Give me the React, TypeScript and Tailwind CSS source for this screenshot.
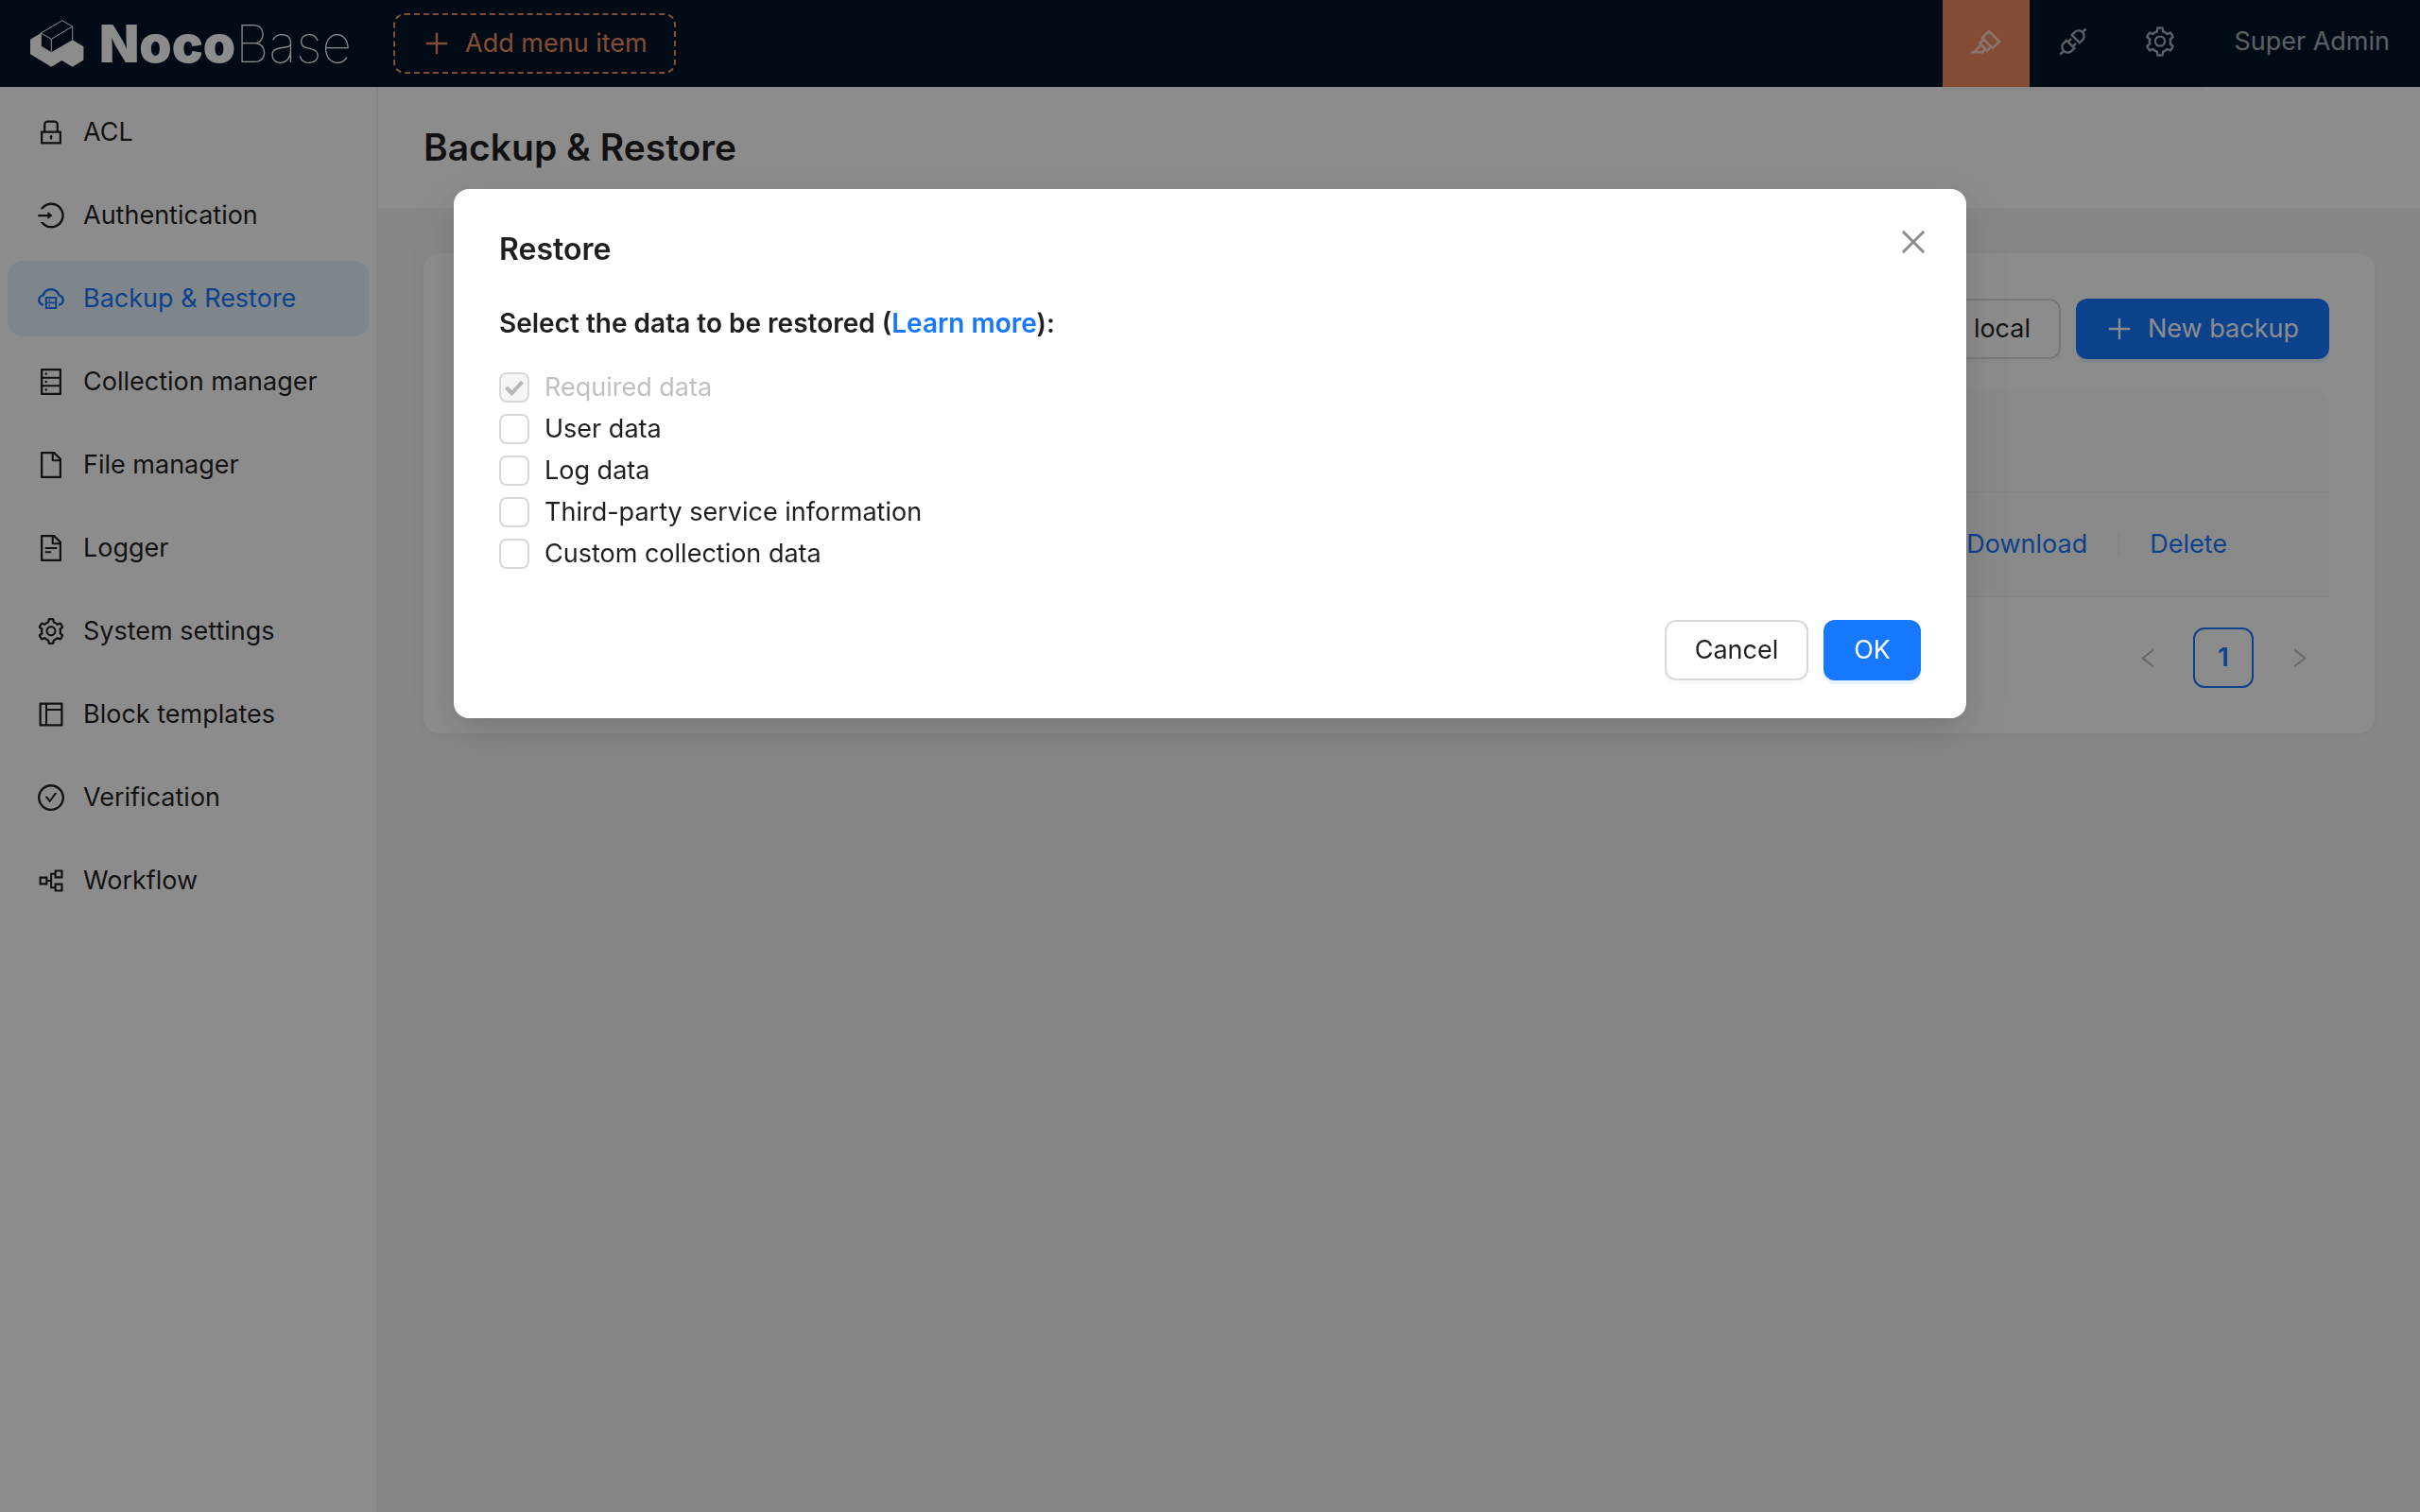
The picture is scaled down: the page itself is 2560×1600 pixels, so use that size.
import React from "react";
import {
  AiOutlineLock, AiOutlineLogin, AiOutlineCloudServer, AiOutlineDatabase, AiOutlineFile, AiOutlineFileText,
  AiOutlineSetting, AiOutlineLayout, AiOutlineCheckCircle, AiOutlinePartition, AiOutlineHighlight, AiOutlineApi,
  AiOutlinePlus, AiOutlineClose, AiOutlineLeft, AiOutlineRight,
} from "react-icons/ai";

const menu = [
  { label: "ACL", Icon: AiOutlineLock },
  { label: "Authentication", Icon: AiOutlineLogin },
  { label: "Backup & Restore", Icon: AiOutlineCloudServer, active: true },
  { label: "Collection manager", Icon: AiOutlineDatabase },
  { label: "File manager", Icon: AiOutlineFile },
  { label: "Logger", Icon: AiOutlineFileText },
  { label: "System settings", Icon: AiOutlineSetting },
  { label: "Block templates", Icon: AiOutlineLayout },
  { label: "Verification", Icon: AiOutlineCheckCircle },
  { label: "Workflow", Icon: AiOutlinePartition },
];

const options = [
  { label: "Required data", locked: true },
  { label: "User data" },
  { label: "Log data" },
  { label: "Third-party service information" },
  { label: "Custom collection data" },
];

function Logo() {
  return (
    <a href="#" aria-label="NocoBase" className="flex h-full w-[384px] shrink-0 items-center gap-4 pl-8 text-white">
      <svg viewBox="0 0 57 50" className="h-[50px] w-[57px]" fill="none">
        <path d="M0 20.7 L11.3 14 V27.6 L22.3 34.3 L44.7 21.2 L56.4 28.2 V42.4 L44.7 49.7 L33.4 43 L22.3 49.7 L0 36.3 Z" fill="currentColor" />
        <path d="M11.3 14 L33.7 0.7 L44.7 6.9 V21.2 M11.3 14 L22.3 20.3 L44.7 6.9 M22.3 20.3 V34.3 M11.3 14 V27.6" stroke="currentColor" strokeWidth="1" />
      </svg>
      <span className="flex items-baseline text-[55px] leading-none">
        <span className="font-black">Noco</span>
        <span className="font-thin">Base</span>
      </span>
    </a>
  );
}

function Header() {
  const tool = "flex h-full w-[92px] items-center justify-center pb-1 text-[36px] shadow-[0_4px_0_rgba(0,0,0,0.02)]";
  return (
    <header className="relative z-10 flex h-[92px] items-center bg-[#001529] text-white/65">
      <Logo />
      <button className="ml-8 flex h-16 items-center gap-3.5 rounded-xl border-2 border-dashed border-[#f18b62] px-7 text-[#f18b62]">
        <AiOutlinePlus className="size-8" />
        Add menu item
      </button>
      <div className="ml-auto flex h-full items-center">
        <button aria-label="UI editor" className={`${tool} bg-[#f18b62]`}><AiOutlineHighlight /></button>
        <button aria-label="Plugin manager" className={tool}><AiOutlineApi /></button>
        <button aria-label="Settings" className={tool}><AiOutlineSetting /></button>
        <button className="h-full px-8 pb-1">Super Admin</button>
      </div>
    </header>
  );
}

function Sidebar() {
  return (
    <nav className="w-[400px] shrink-0 border-r-2 border-[#f0f0f0] bg-white p-2">
      <ul className="flex flex-col gap-2">
        {menu.map(({ label, Icon, active }) => (
          <li key={label}>
            <a
              href="#"
              className={`flex h-20 items-center gap-[18px] rounded-2xl pl-[30px] ${active ? "bg-[#e6f4ff] text-[#1677ff]" : ""}`}
            >
              <Icon className="size-8" />
              {label}
            </a>
          </li>
        ))}
      </ul>
    </nav>
  );
}

function Content() {
  return (
    <main className="min-w-0 flex-1">
      <div className="flex h-32 items-center bg-white px-12">
        <h1 className="text-[39px] font-semibold">Backup &amp; Restore</h1>
      </div>
      <section className="m-12 rounded-2xl bg-white p-12 shadow-[0_2px_4px_rgba(0,0,0,0.03),0_2px_12px_rgba(0,0,0,0.02)]">
        <div className="flex justify-end gap-4">
          <button className="h-16 rounded-xl border-2 border-[#d9d9d9] px-[30px] shadow-[0_4px_0_rgba(0,0,0,0.02)]">
            Restore backup from local
          </button>
          <button className="flex h-16 items-center gap-3.5 rounded-xl bg-[#1677ff] px-8 pl-[30px] text-white shadow-[0_4px_0_rgba(5,145,255,0.1)]">
            <AiOutlinePlus className="size-8" />
            New backup
          </button>
        </div>
        <table className="mt-8 w-full border-separate border-spacing-0 text-left">
          <thead>
            <tr className="h-[110px] bg-[#fafafa]">
              <th className="rounded-tl-2xl border-b-2 border-[#f0f0f0]" />
              <th className="rounded-tr-2xl border-b-2 border-[#f0f0f0]" />
            </tr>
          </thead>
          <tbody>
            <tr className="h-[110px] bg-[#fafafa]">
              <td className="border-b-2 border-[#f0f0f0]" />
              <td className="w-[418px] border-b-2 border-[#f0f0f0] text-[#1677ff]">
                <div className="flex items-center justify-end gap-8 pr-[108px]">
                  <a href="#">Download</a>
                  <span className="h-6 w-0.5 bg-[#f0f0f0]" />
                  <a href="#">Delete</a>
                </div>
              </td>
            </tr>
          </tbody>
        </table>
        <div className="mt-8 flex justify-end gap-4">
          <button aria-label="Previous page" disabled className="flex size-16 items-center justify-center text-black/25">
            <AiOutlineLeft />
          </button>
          <button aria-current="page" className="size-16 rounded-xl border-2 border-[#1677ff] font-semibold text-[#1677ff]">1</button>
          <button aria-label="Next page" disabled className="flex size-16 items-center justify-center text-black/25">
            <AiOutlineRight />
          </button>
        </div>
      </section>
    </main>
  );
}

function Option({ label, locked }: { label: string; locked?: boolean }) {
  return (
    <label className={`flex h-11 items-center gap-4 ${locked ? "text-black/25" : ""}`}>
      <span className="relative grid size-8 shrink-0">
        <input
          type="checkbox"
          defaultChecked={locked}
          disabled={locked}
          className="peer size-8 appearance-none rounded-lg border-2 border-[#d9d9d9] bg-white disabled:bg-[#f5f5f5]"
        />
        <svg viewBox="0 0 32 32" className="pointer-events-none absolute inset-0 hidden size-8 peer-checked:block" fill="none">
          <path d="M7.500 16 L13.500 22 L24.500 10" stroke="currentColor" strokeWidth="4" />
        </svg>
      </span>
      {label}
    </label>
  );
}

function RestoreDialog() {
  return (
    <div className="fixed inset-0 z-20 flex items-start justify-center bg-black/45 pt-[200px]">
      <div
        role="dialog"
        aria-modal="true"
        aria-labelledby="dialog-title"
        className="relative w-full max-w-[1600px] rounded-2xl bg-white px-12 py-10 shadow-[0_12px_32px_rgba(0,0,0,0.08),0_6px_12px_-8px_rgba(0,0,0,0.12),0_18px_56px_16px_rgba(0,0,0,0.05)]"
      >
        <button aria-label="Close" className="absolute top-[34px] right-[34px] flex size-11 items-center justify-center text-[36px] text-black/45">
          <AiOutlineClose />
        </button>
        <h2 id="dialog-title" className="text-[32px] leading-[48px] font-semibold">Restore</h2>
        <p className="mt-8 text-[28px] leading-[44px] font-semibold">
          Select the data to be restored (<a href="#" className="text-[#1677ff]">Learn more</a>):
        </p>
        <div className="mt-6 flex flex-col items-start">
          {options.map((o) => (
            <Option key={o.label} {...o} />
          ))}
        </div>
        <div className="mt-12 flex justify-end gap-4">
          <button className="h-16 rounded-xl border-2 border-[#d9d9d9] px-[30px] shadow-[0_4px_0_rgba(0,0,0,0.02)]">Cancel</button>
          <button className="h-16 rounded-xl bg-[#1677ff] px-8 text-white shadow-[0_4px_0_rgba(5,145,255,0.1)]">OK</button>
        </div>
      </div>
    </div>
  );
}

export default function App() {
  return (
    <div className="flex min-h-screen flex-col bg-[#f5f5f5] font-['Inter',sans-serif] text-[27px] leading-[44px] text-black/88">
      <Header />
      <div className="flex flex-1">
        <Sidebar />
        <Content />
      </div>
      <RestoreDialog />
    </div>
  );
}
